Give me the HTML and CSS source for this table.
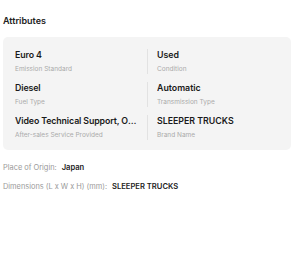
FILE: index.html
```html
<!DOCTYPE html>
<html>
<head>
<meta charset="utf-8">
<link rel="stylesheet" href="styles.css">
</head>
<body>
<div class="page">
  <h2 class="title">Attributes</h2>
  <div class="card">
    <div class="grid">
      <div class="cell"><div class="val">Euro 4</div><div class="lbl">Emission Standard</div></div>
      <div class="cell right"><div class="val">Used</div><div class="lbl">Condition</div></div>
      <div class="cell"><div class="val">Diesel</div><div class="lbl">Fuel Type</div></div>
      <div class="cell right"><div class="val">Automatic</div><div class="lbl">Transmission Type</div></div>
      <div class="cell"><div class="val">Video Technical Support, Online Support</div><div class="lbl">After-sales Service Provided</div></div>
      <div class="cell right"><div class="val">SLEEPER TRUCKS</div><div class="lbl">Brand Name</div></div>
    </div>
  </div>
  <div class="info first"><span class="k">Place of Origin:</span><span class="v">Japan</span></div>
  <div class="info"><span class="k">Dimensions (L x W x H) (mm):</span><span class="v">SLEEPER TRUCKS</span></div>
</div>
</body>
</html>
```
FILE: styles.css
```css
* { box-sizing: border-box; }
html, body { margin: 0; padding: 0; background: #fff; }
body { font-family: Inter, "Noto Sans", sans-serif; color: #222; }
.page { padding: 15px 9px 0 3px; }
.title { margin: 0 0 10px; font-size: 9px; line-height: 12px; font-weight: 600; color: #222; }
.card { background: #f4f4f4; border-radius: 5px; padding: 12px 12px 10px; }
.grid { display: grid; grid-template-columns: 132px 1fr; row-gap: 8px; }
.cell { min-width: 0; padding-right: 8px; }
.cell.right { border-left: 1px solid #e2e2e2; padding-left: 9px; padding-right: 0; }
.val { font-size: 8.8px; line-height: 12px; font-weight: 600; color: #1a1a1a; white-space: nowrap; overflow: hidden; text-overflow: ellipsis; }
.cell:not(.right) .val { letter-spacing: -0.12px; }
.lbl { margin-top: 4px; font-size: 6.5px; line-height: 9px; color: #aaa; white-space: nowrap; }
.info { margin-top: 10px; font-size: 7.4px; line-height: 9px; color: #999; white-space: nowrap; }
.info.first { margin-top: 13px; }
.info .v { margin-left: 5px; color: #222; font-weight: 600; font-size: 7.6px; }
```
